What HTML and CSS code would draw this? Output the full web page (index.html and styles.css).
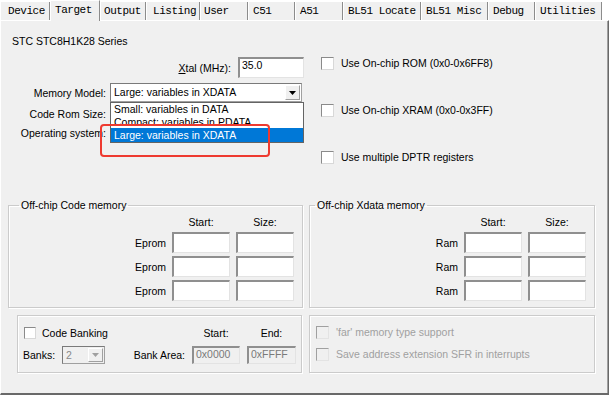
FILE: index.html
```html
<!DOCTYPE html>
<html lang="en">
<head>
    <meta charset="UTF-8">
    <title>Options for Target</title>
    <link rel="stylesheet" href="styles.css">
</head>
<body>

<div class="dialog">
    <div class="tabs">
        <div class="tab">Device</div>
        <div class="tab active">Target</div>
        <div class="tab">Output</div>
        <div class="tab">Listing</div>
        <div class="tab">User</div>
        <div class="tab">C51</div>
        <div class="tab">A51</div>
        <div class="tab">BL51 Locate</div>
        <div class="tab">BL51 Misc</div>
        <div class="tab">Debug</div>
        <div class="tab">Utilities</div>
    </div>

    <div class="panel">
        <div class="device-name">STC STC8H1K28 Series</div>

        <div class="top">
            <div class="left-col">
                <div class="xtal-row">
                    <span class="xtal-label"><u>X</u>tal (MHz):</span>
                    <div class="edit xtal">35.0</div>
                </div>
                <div class="field-row memory-row">
                    <span class="field-label">Memory Model:</span>
                    <div class="combo">
                        <div class="combo-text">Large: variables in XDATA</div>
                        <div class="combo-btn">
                            <svg width="7" height="4" viewBox="0 0 7 4"><path d="M0 0h7L3.5 4z" fill="#000"/></svg>
                        </div>
                        <!-- 打开的下拉列表 -->
                        <div class="droplist">
                            <div class="opt">Small: variables in DATA</div>
                            <div class="opt clipped">Compact: variables in PDATA</div>
                            <div class="opt selected">Large: variables in XDATA</div>
                        </div>
                        <div class="mark-box"></div>
                    </div>
                </div>
                <div class="field-row rom-row">
                    <span class="field-label">Code Rom Size:</span>
                </div>
                <div class="field-row os-row">
                    <span class="field-label">Operating system:</span>
                </div>
            </div>

            <div class="right-col">
                <div class="check-row"><span class="check"></span>Use On-chip ROM (0x0-0x6FF8)</div>
                <div class="check-row"><span class="check"></span>Use On-chip XRAM (0x0-0x3FF)</div>
                <div class="check-row"><span class="check"></span>Use multiple DPTR registers</div>
            </div>
        </div>

        <div class="groups">
            <fieldset class="group code-mem">
                <legend>Off-chip Code memory</legend>
                <div class="mem-grid">
                    <span></span><span class="col-head">Start:</span><span class="col-head">Size:</span>
                    <span class="row-label">Eprom</span><div class="edit"></div><div class="edit"></div>
                    <span class="row-label">Eprom</span><div class="edit"></div><div class="edit"></div>
                    <span class="row-label">Eprom</span><div class="edit"></div><div class="edit"></div>
                </div>
            </fieldset>
            <fieldset class="group xdata-mem">
                <legend>Off-chip Xdata memory</legend>
                <div class="mem-grid">
                    <span></span><span class="col-head">Start:</span><span class="col-head">Size:</span>
                    <span class="row-label">Ram</span><div class="edit"></div><div class="edit"></div>
                    <span class="row-label">Ram</span><div class="edit"></div><div class="edit"></div>
                    <span class="row-label">Ram</span><div class="edit"></div><div class="edit"></div>
                </div>
            </fieldset>
        </div>

        <div class="groups bottom">
            <div class="group banking">
                <div class="bank-check"><span class="check"></span>Code Banking</div>
                <span class="col-head">Start:</span>
                <span class="col-head">End:</span>
                <span class="bank-label">Banks:</span>
                <div class="combo small disabled">
                    <div class="combo-text">2</div>
                    <div class="combo-btn">
                        <svg width="7" height="4" viewBox="0 0 7 4"><path d="M0 0h7L3.5 4z" fill="#a0a0a0"/></svg>
                    </div>
                </div>
                <span class="bank-label area">Bank Area:</span>
                <div class="edit disabled">0x0000</div>
                <div class="edit disabled">0xFFFF</div>
            </div>
            <div class="group far">
                <div class="check-row off"><span class="check"></span>'far' memory type support</div>
                <div class="check-row off"><span class="check"></span>Save address extension SFR in interrupts</div>
            </div>
        </div>
    </div>
</div>

</body>
</html>
```

FILE: styles.css
```css
body {
    margin: 0;
    background-color: #fff;
    font-family: "Liberation Sans", Arial, sans-serif;
    font-size: 10.5px;
    color: #000;
}
.dialog {
    width: 612px;
}

/* 标签页 */
.tabs {
    display: flex;
    align-items: flex-end;
    height: 20px;
}
.tab {
    box-sizing: border-box;
    height: 18px;
    line-height: 18px;
    padding-left: 4px;
    background-color: #f0f0f0;
    border-left: 1px solid #fff;
    border-right: 1px solid #8c8c8c;
    font-family: "Liberation Mono", "Courier New", monospace;
    font-size: 11px;
    letter-spacing: -0.45px;
    white-space: nowrap;
}
.tab.active {
    position: relative;
    z-index: 1;
    height: 21px;
    line-height: 19px;
    margin-bottom: -1px;
    border-top: 1px solid #fff;
}
.tab:nth-child(1) { width: 50px; padding-left: 7px; }
.tab:nth-child(2) { width: 50px; }
.tab:nth-child(3) { width: 46px; padding-left: 3px; }
.tab:nth-child(4) { width: 54px; padding-left: 6px; }
.tab:nth-child(5) { width: 48px; padding-left: 3px; }
.tab:nth-child(6) { width: 47px; }
.tab:nth-child(7) { width: 48px; }
.tab:nth-child(8) { width: 78px; }
.tab:nth-child(9) { width: 67px; }
.tab:nth-child(10) { width: 47px; }
.tab:nth-child(11) { width: 67px; }

.panel {
    box-sizing: border-box;
    width: 609px;
    height: 375px;
    background-color: #f0f0f0;
    border-top: 1px solid #fff;
    border-left: 1px solid #fff;
    border-right: 1px solid #696969;
    border-bottom: 2px solid #696969;
    box-shadow: inset -1px 0 0 #a0a0a0;
}
.device-name {
    margin-top: 14px;
    padding-left: 11px;
    line-height: 13px;
}

/* 上半部分 */
.top {
    display: grid;
    grid-template-columns: 303px 1fr;
    height: 144px;
    margin-top: 7px;
}
.left-col {
    padding-top: 2px;
}
.xtal-row {
    display: flex;
    justify-content: flex-end;
    align-items: center;
    height: 21px;
}
.xtal-label {
    margin-right: 7px;
}
.field-row {
    display: flex;
    align-items: center;
    height: 19px;
}
.memory-row { margin-top: 5px; }
.rom-row { margin-top: 2px; }
.field-label {
    width: 105px;
    margin-right: 4px;
    text-align: right;
    white-space: nowrap;
}

.edit {
    box-sizing: border-box;
    height: 21px;
    padding-left: 2px;
    line-height: 12px;
    background-color: #fff;
    border-style: solid;
    border-width: 2px 1px 1px 2px;
    border-color: #8f8f8f #e3e3e3 #e3e3e3 #8f8f8f;
}
.edit.xtal {
    width: 66px;
}
.edit.disabled {
    height: 18px;
    line-height: 13px;
    background-color: #f0f0f0;
    color: #7a7a7a;
}

.combo {
    position: relative;
    box-sizing: border-box;
    display: flex;
    width: 192px;
    height: 19px;
    background-color: #fff;
    border: 1px solid #a0a0a0;
    border-top-color: #7a7a7a;
    border-left-color: #7a7a7a;
}
.combo-text {
    flex: 1;
    padding-left: 3px;
    line-height: 16px;
}
.combo-btn {
    box-sizing: border-box;
    width: 15px;
    margin: 1px;
    display: flex;
    align-items: center;
    justify-content: center;
    background-color: #f0f0f0;
    border: 1px solid #fff;
    border-right-color: #a0a0a0;
    border-bottom-color: #a0a0a0;
}
.combo.small {
    width: 43px;
    height: 18px;
}
.combo.disabled {
    background-color: #f0f0f0;
    color: #8a8a8a;
}

.droplist {
    position: absolute;
    top: 18px;
    left: -1px;
    z-index: 2;
    box-sizing: border-box;
    width: 194px;
    background-color: #fff;
    border: 1px solid #646464;
}
.opt {
    height: 13px;
    line-height: 13px;
    padding-left: 3px;
    white-space: nowrap;
}
.opt.clipped {
    height: 9px;
    margin-bottom: 3px;
    overflow: hidden;
}
.opt.selected {
    height: 14px;
    line-height: 14px;
    background-color: #0078d7;
    color: #fff;
}
.mark-box {
    position: absolute;
    top: 40px;
    left: -11px;
    z-index: 3;
    box-sizing: border-box;
    width: 170px;
    height: 33px;
    border: 2px solid #ee3a30;
    border-radius: 4px;
}

.right-col {
    display: flex;
    flex-direction: column;
    gap: 31px;
    padding-left: 17px;
}
.check-row {
    display: flex;
    align-items: center;
    height: 16px;
    white-space: nowrap;
}
.check {
    box-sizing: border-box;
    width: 13px;
    height: 13px;
    margin-right: 7px;
    background-color: #fff;
    border: 1px solid;
    border-color: #8a8a8a #d8d8d8 #d8d8d8 #8a8a8a;
    flex-shrink: 0;
}
.check-row.off {
    color: #a0a0a0;
    height: 14px;
}
.check-row.off .check {
    background-color: #f0f0f0;
    border-color: #a0a0a0 #e3e3e3 #e3e3e3 #a0a0a0;
}

/* 分组框 */
.groups {
    display: flex;
    gap: 6px;
    margin-left: 7px;
}
.group {
    box-sizing: border-box;
    margin: 0;
    min-width: 0;
    border: 1px solid #cbcbcb;
    box-shadow: inset 1px 1px 0 #fff, 1px 1px 0 #fff;
}
fieldset.group {
    padding: 0 8px 6px 0;
}
.group legend {
    padding: 0 2px;
    line-height: 13px;
}
.code-mem { width: 295px; }
.code-mem legend { margin-left: 10px; }
.xdata-mem { width: 286px; }
.xdata-mem legend { margin-left: 5px; }

.mem-grid {
    display: grid;
    grid-template-columns: 1fr 58px 58px;
    grid-template-rows: 14px 21px 21px 21px;
    column-gap: 6px;
    row-gap: 3px;
    margin-top: 3px;
}
.col-head {
    text-align: center;
    align-self: center;
}
.row-label {
    text-align: right;
    align-self: center;
}

.groups.bottom {
    margin-top: 7px;
    margin-left: 16px;
    gap: 7px;
}
.banking {
    width: 285px;
    height: 58px;
    display: grid;
    grid-template-columns: 32px 43px 73px 48px 49px;
    grid-template-rows: 14px 18px;
    column-gap: 7px;
    row-gap: 6px;
    padding: 10px 5px 0 5px;
}
.bank-check {
    grid-column: 1 / 4;
    display: flex;
    align-items: center;
    margin-left: 1px;
}
.bank-check .check {
    width: 12px;
    height: 12px;
    margin-right: 6px;
}
.bank-label {
    align-self: center;
    white-space: nowrap;
}
.bank-label.area {
    text-align: right;
}
.far {
    width: 286px;
    height: 58px;
    display: flex;
    flex-direction: column;
    gap: 8px;
    padding: 9px 0 0 6px;
}
```
